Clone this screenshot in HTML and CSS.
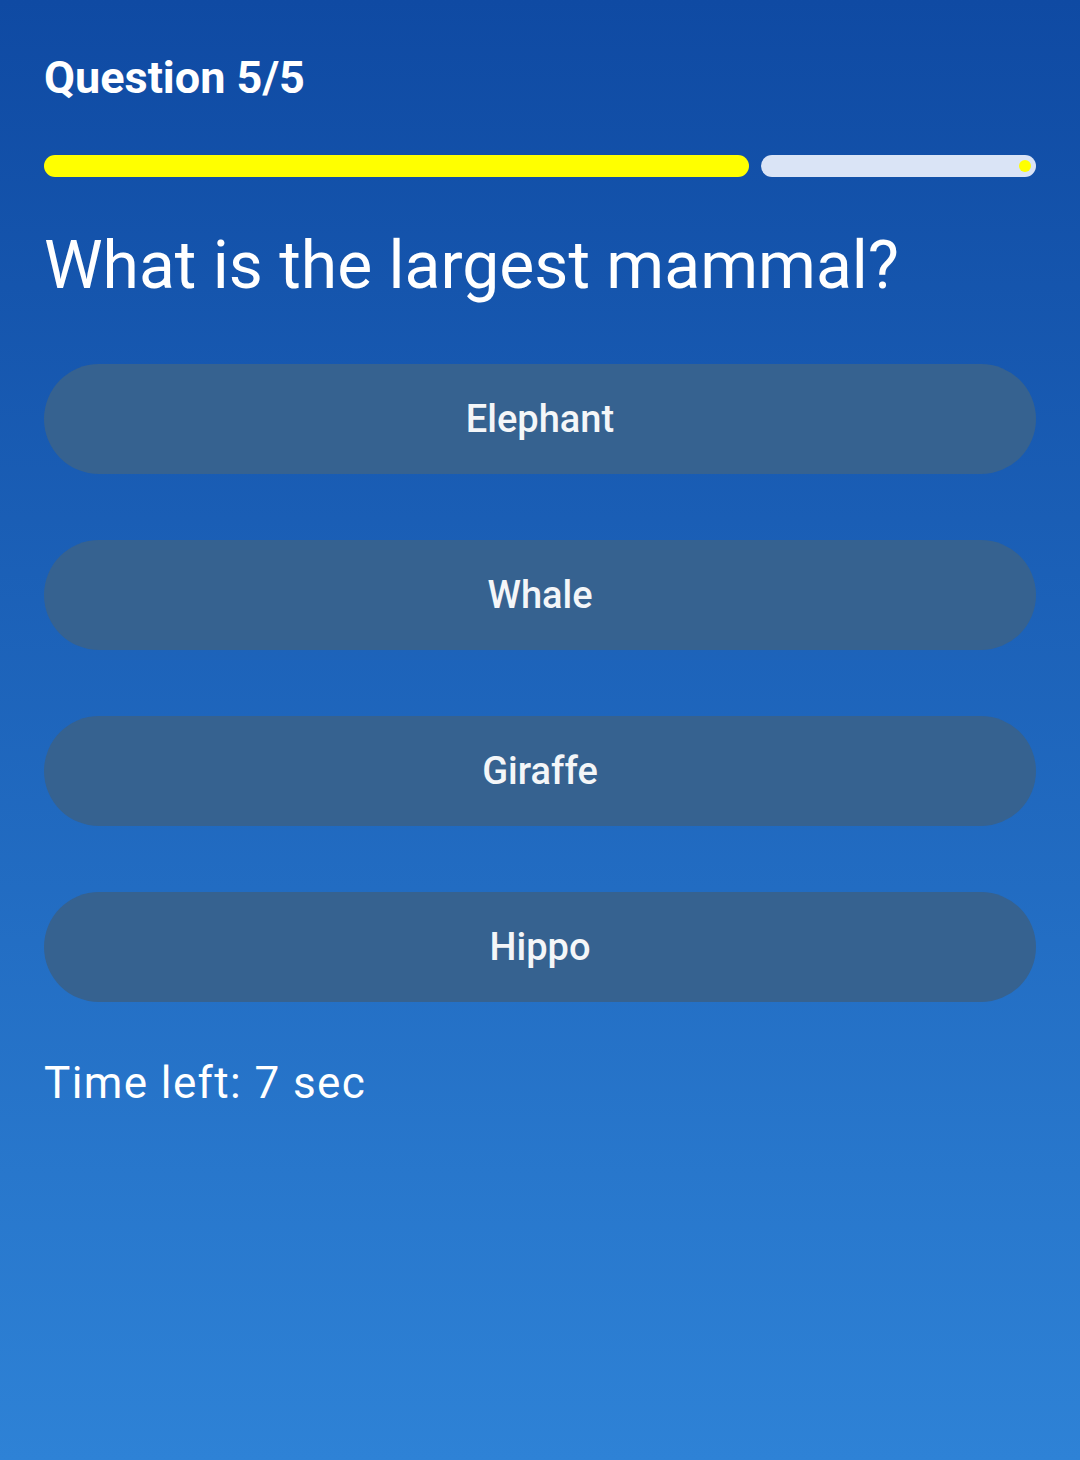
FILE: index.html
```html
<!DOCTYPE html>
<html lang="en">
<head>
<meta charset="utf-8">
<title>Quiz</title>
<link rel="stylesheet" href="styles.css">
</head>
<body>
<main class="screen">
  <h1 class="counter">Question 5/5</h1>
  <div class="progress">
    <div class="progress-fill"></div>
    <div class="progress-track"><span class="stop-dot"></span></div>
  </div>
  <h2 class="question">What is the largest mammal?</h2>
  <div class="answers">
    <button class="answer">Elephant</button>
    <button class="answer">Whale</button>
    <button class="answer">Giraffe</button>
    <button class="answer">Hippo</button>
  </div>
  <p class="timer">Time left: 7 sec</p>
</main>
</body>
</html>
```
FILE: styles.css
```css
html, body {
  margin: 0;
  padding: 0;
}
body {
  width: 1080px;
  height: 1460px;
  background: linear-gradient(180deg, #0f4aa3 0%, #2e82d6 100%);
  font-family: Roboto, "Noto Sans", sans-serif;
  color: #ffffff;
}
.screen {
  padding: 51px 44px 0 44px;
  display: flex;
  flex-direction: column;
}
.counter {
  margin: 0;
  font-size: 45px;
  font-weight: 700;
  line-height: 54px;
  color: #ffffff;
}
.progress {
  margin-top: 50px;
  display: flex;
  gap: 12px;
  height: 22px;
}
.progress-fill {
  width: 705px;
  background: #ffff00;
  border-radius: 11px;
}
.progress-track {
  flex: 1;
  background: #dae4f6;
  border-radius: 11px;
  position: relative;
}
.stop-dot {
  position: absolute;
  right: 5px;
  top: 5px;
  width: 12px;
  height: 12px;
  border-radius: 50%;
  background: #ffff00;
}
.question {
  margin: 49px 0 0 0;
  font-size: 66px;
  font-weight: 400;
  line-height: 80px;
  color: #ffffff;
}
.answers {
  margin-top: 58px;
  display: flex;
  flex-direction: column;
  gap: 66px;
}
.answer {
  height: 110px;
  border: none;
  border-radius: 55px;
  background: #366290;
  color: #f4f6f8;
  font-family: Roboto, "Noto Sans", sans-serif;
  font-size: 38px;
  font-weight: 500;
  padding: 0;
}
.timer {
  margin: 56px 0 0 0;
  font-size: 44px;
  line-height: 50px;
  font-weight: 400;
  letter-spacing: 1.4px;
  color: #ffffff;
}
```
